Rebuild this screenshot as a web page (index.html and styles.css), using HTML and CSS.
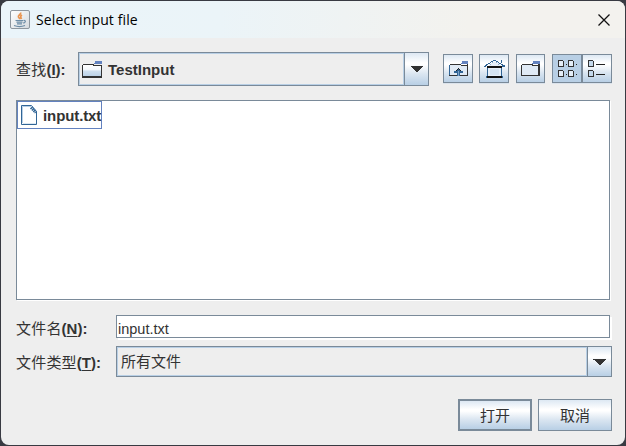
FILE: index.html
```html
<!DOCTYPE html>
<html lang="zh-CN">
<head>
<meta charset="utf-8">
<title>Select input file</title>
<link rel="stylesheet" href="styles.css">
</head>
<body>
<div class="dialog">
  <header class="titlebar">
    <svg class="java" width="20" height="19" viewBox="0 0 20 19">
      <defs><linearGradient id="tile" x1="0" y1="0" x2="1" y2="1"><stop offset="0" stop-color="#fff"/><stop offset="1" stop-color="#d4d9de"/></linearGradient></defs>
      <rect x=".5" y=".5" width="19" height="18" rx="1.5" fill="url(#tile)" stroke="#8e969e"/>
      <path d="M10.500 2.500c1 2-3 3-2 4.500l1.500 2M12 5c-2 1-1.500 2-.5 4" fill="none" stroke="#e99450" stroke-width="1.800"/>
      <path d="M5.500 10.500h7.500M6.500 12.200h6M7 13.800h5M4 15.500c3 1.200 8 1.200 11 0M13.500 10.500c3-.5 2 2.500-.5 2.500" fill="none" stroke="#6c8ca6" stroke-width="1.200"/>
    </svg>
    <span class="title">Select input file</span>
    <svg class="close" width="12" height="12" viewBox="0 0 12 12"><path d="M.5.500l11 11M11.500.500l-11 11" stroke="#111" stroke-width="1.250"/></svg>
  </header>

  <div class="toolbar">
    <label class="label"><span>查找</span>(<u>I</u>):</label>
    <div class="combo combo-dir">
      <div class="value">
        <svg class="folder" width="20" height="17" viewBox="0 0 20 17" shape-rendering="crispEdges">
          <defs><linearGradient id="fold" x1="0" y1="0" x2="0" y2="1"><stop offset="0" stop-color="#fff"/><stop offset=".4" stop-color="#f3f7fb"/><stop offset=".5" stop-color="#d0e0ef"/><stop offset="1" stop-color="#b8cfe5"/></linearGradient></defs>
          <rect x="1" y="4" width="18" height="12" fill="url(#fold)"/>
          <path d="M1 3h11v1H1zM0 4h1v12H0zM0 15h20v2H0zM19 4h1v12h-1zM11 4h8v1h-8z" fill="#333"/>
          <path d="M13 0h7v3h-8V2h1z" fill="#6382bf"/>
        </svg>
        <b>TestInput</b>
      </div>
      <div class="arrow"><svg width="12" height="6" viewBox="0 0 12 6" shape-rendering="crispEdges"><path d="M0 0h12v1h-1v1h-1v1H9v1H8v1H7v1H5V5H4V4H3V3H2V2H1V1H0z" fill="#333"/></svg></div>
    </div>
    <div class="tool up">
      <svg width="19" height="16" viewBox="0 0 19 16" shape-rendering="crispEdges">
        <rect x="1" y="4" width="17" height="10" fill="#e0eaf5"/>
        <path d="M1 3h11v1H1zM0 4h1v11H0z" fill="#28537d"/>
        <path d="M12 4h6v1h-6zM18 3h1v12h-1zM1 3h11v1H1zM0 14h19v1H0z" fill="#333"/>
        <path d="M0 4h1v10H0z" fill="#316596"/>
        <path d="M13 0h6v3h-7V2h1z" fill="#6382bf"/>
        <path d="M9 7h1v1h1v1h1v1h2v2h-3v3H8v-3H5v-2h2V9h1V8h1z" fill="#316596"/>
        <path d="M9 7h1v1h1v1h1v1h-1V9h-1V8H9v1H8v1H7V9h1V8h1z" fill="#222"/>
        <path d="M9 10h1v5H9z" fill="#7fa2c6"/>
      </svg>
    </div>
    <div class="tool home">
      <svg width="21" height="18" viewBox="0 0 21 18" shape-rendering="crispEdges">
        <path d="M4 6h13v10H4zM8 2h5l4 4H4z" fill="#e5eef8"/>
        <path d="M9 0h3v1H9zM7 1h2v1H7zM12 1h2v1h-2zM6 2h1v1H6zM14 2h1v1h-1zM4 3h2v1H4zM15 3h2v1h-2zM2 4h2v1H2zM17 4h2v1h-2zM1 5h2v1H1zM0 6h2v1H0zM18 5h3v2h-3zM17 0h1v3h-1z" fill="#316596"/>
        <path d="M8 2h1v1H8zM12 2h1v1h-1zM6 4h1v1H6zM14 4h1v1h-1z" fill="#8eadcb"/>
        <path d="M3 6h15v2H3zM2 16h17v2H2z" fill="#111"/>
        <path d="M3 8h1v8H3zM17 8h1v8h-1zM2 16h1v2H2zM18 16h1v2h-1z" fill="#316596"/>
        <path d="M6 9h9v6H6z" fill="#d5e3f1"/>
      </svg>
    </div>
    <div class="tool new">
      <svg width="19" height="16" viewBox="0 0 19 16" shape-rendering="crispEdges">
        <rect x="1" y="4" width="17" height="10" fill="#e0eaf5"/>
        <path d="M1 3h11v1H1zM0 4h1v11H0zM11 4h7v1h-7zM17 3h2v12h-2zM0 14h19v1H0z" fill="#333"/>
        <path d="M12 0h7v3h-8V2h1z" fill="#6382bf"/>
      </svg>
    </div>
    <div class="views">
      <div class="view selected">
        <svg width="20" height="17" viewBox="0 0 20 17" shape-rendering="crispEdges">
          <path d="M.5.500h4l1 1v5h-5zM10.500.500h4l1 1v5h-5zM.5 10.500h4l1 1v5h-5zM10.500 10.500h4l1 1v5h-5z" fill="#e4edf7" stroke="#333"/>
          <path d="M8 4h1v1H8zM18 4h1v1h-1zM8 14h1v1H8zM18 14h1v1h-1z" fill="#222"/>
        </svg>
      </div>
      <div class="view">
        <svg width="18" height="17" viewBox="0 0 18 17" shape-rendering="crispEdges">
          <path d="M.5.500h4l1 1v5h-5zM.5 10.500h4l1 1v5h-5z" fill="#c5d9ec" stroke="#333"/>
          <path d="M8 4h9v1H8zM8 14h9v1H8z" fill="#222"/>
        </svg>
      </div>
    </div>
  </div>

  <div class="list">
    <div class="item">
      <svg width="16" height="20" viewBox="0 0 16 20">
        <path d="M.5.500h10l5 6v13H.5z" fill="#fff" stroke="#316596"/>
        <path d="M1.500 18V1.500H10" fill="none" stroke="#b8cfe5"/>
        <path d="M10 2.500l5 5" stroke="#316596" stroke-width="3" stroke-dasharray="1.500 .5"/>
        <path d="M2 18.500h13" stroke="#dce8f3"/>
      </svg>
      <b>input.txt</b>
    </div>
  </div>

  <div class="form">
    <label class="label"><span>文件名</span>(<u>N</u>):</label>
    <div class="field">input.txt</div>
    <label class="label"><span>文件类型</span>(<u>T</u>):</label>
    <div class="combo combo-type">
      <div class="value">所有文件</div>
      <div class="arrow"><svg width="13" height="6" viewBox="0 0 13 6" shape-rendering="crispEdges"><path d="M0 0h13v1h-1v1h-1v1h-1v1H9v1H8v1H6V5H5V4H4V3H3V2H2V1H0z" fill="#333"/></svg></div>
    </div>
  </div>

  <div class="actions">
    <div class="button default">打开</div>
    <div class="button">取消</div>
  </div>
</div>
</body>
</html>
```
FILE: styles.css
```css
* { box-sizing: border-box; }
body {
  margin: 0;
  width: 626px;
  height: 446px;
  overflow: hidden;
  padding: 1px;
  background: #383a42;
  color: #333;
  font: 15px/18px "Liberation Sans", "Noto Sans CJK SC", sans-serif;
}
svg { display: block; flex: none; }
.dialog {
  width: 624px;
  height: 444px;
  border-radius: 8px;
  overflow: hidden;
  background: #eee;
}
.titlebar {
  height: 37px;
  display: flex;
  align-items: center;
  padding: 0 15px 0 9px;
  background: linear-gradient(90deg, #eaf4fa 0%, #ebf4f8 35%, #f3f2ee 75%);
}
.title {
  margin-left: 6px;
  flex: 1;
  color: #000;
  font: 14px/20px "Open Sans", sans-serif;
  letter-spacing: 0.12px;
}
.toolbar {
  display: flex;
  align-items: flex-start;
  height: 34px;
  margin: 14px 0 0 15px;
}
.toolbar .label { width: 62px; line-height: 36px; }
.label { font-weight: bold; white-space: nowrap; }
.label span { font-weight: 400; letter-spacing: 0.2px; }
.label u {
  text-decoration-thickness: 1px;
  text-underline-offset: 2px;
}
.combo {
  display: flex;
  border: 1px solid #7a8a99;
}
.combo .value {
  flex: 1;
  display: flex;
  align-items: center;
  border: 1px solid #b8cfe5;
}
.arrow {
  width: 24px;
  border-left: 1px solid #7a8a99;
  display: flex;
  align-items: center;
  justify-content: center;
}
.arrow, .tool, .view, .button {
  background: linear-gradient(#dde8f3 0%, #fff 30%, #fff 36%, #dbe6f1 65%, #b8cfe5 100%);
}
.combo-dir { width: 351px; height: 34px; }
.combo-dir .value { padding-left: 2px; gap: 6px; }
.combo-dir b, .item b { padding-top: 2px; }
.tool {
  width: 30px;
  height: 29px;
  margin-top: 2px;
  display: flex;
  align-items: center;
  justify-content: center;
  border: 1px solid #7a8a99;
  box-shadow: 0 1px #dbe3ec;
}
.up { margin-left: 14px; }
.home { margin-left: 6px; }
.new { margin-left: 7px; width: 29px; }
.views { display: flex; margin: 2px 0 0 7px; }
.view {
  width: 30px;
  height: 29px;
  display: flex;
  align-items: center;
  padding-left: 5px;
  border: 1px solid #7a8a99;
  box-shadow: 0 1px #dbe3ec;
}
.view.selected { background: #b8cfe5; }
.list {
  width: 594px;
  height: 200px;
  margin: 14px 0 0 15px;
  background: #fff;
  border: 1px solid #7a8a99;
  box-shadow: 1px 1px #fff;
}
.item {
  width: 85px;
  height: 28px;
  display: flex;
  align-items: center;
  gap: 6px;
  padding-left: 3px;
  border: 1px solid #6382bf;
}
.item b { letter-spacing: -0.1px; }
.form {
  display: grid;
  grid-template-columns: 100px 496px;
  grid-template-rows: 25px 31px;
  row-gap: 6px;
  margin: 15px 0 0 15px;
}
.form .label { align-self: center; padding-top: 2px; }
.field {
  width: 494px;
  height: 23px;
  padding: 3px 0 0 1px;
  border: 1px solid #7a8a99;
  background: #fff;
  box-shadow: 2px 2px #fff;
  font-size: 14.500px;
  line-height: 20px;
}
.combo-type .value { padding: 1px 0 0 3px; }
.actions {
  display: flex;
  justify-content: flex-end;
  gap: 6px;
  margin: 22px 13px 0 0;
}
.button {
  width: 74px;
  height: 32px;
  border: 1px solid #7a8a99;
  text-align: center;
  line-height: 31px;
}
.default { border-width: 2px; line-height: 29px; }
```
